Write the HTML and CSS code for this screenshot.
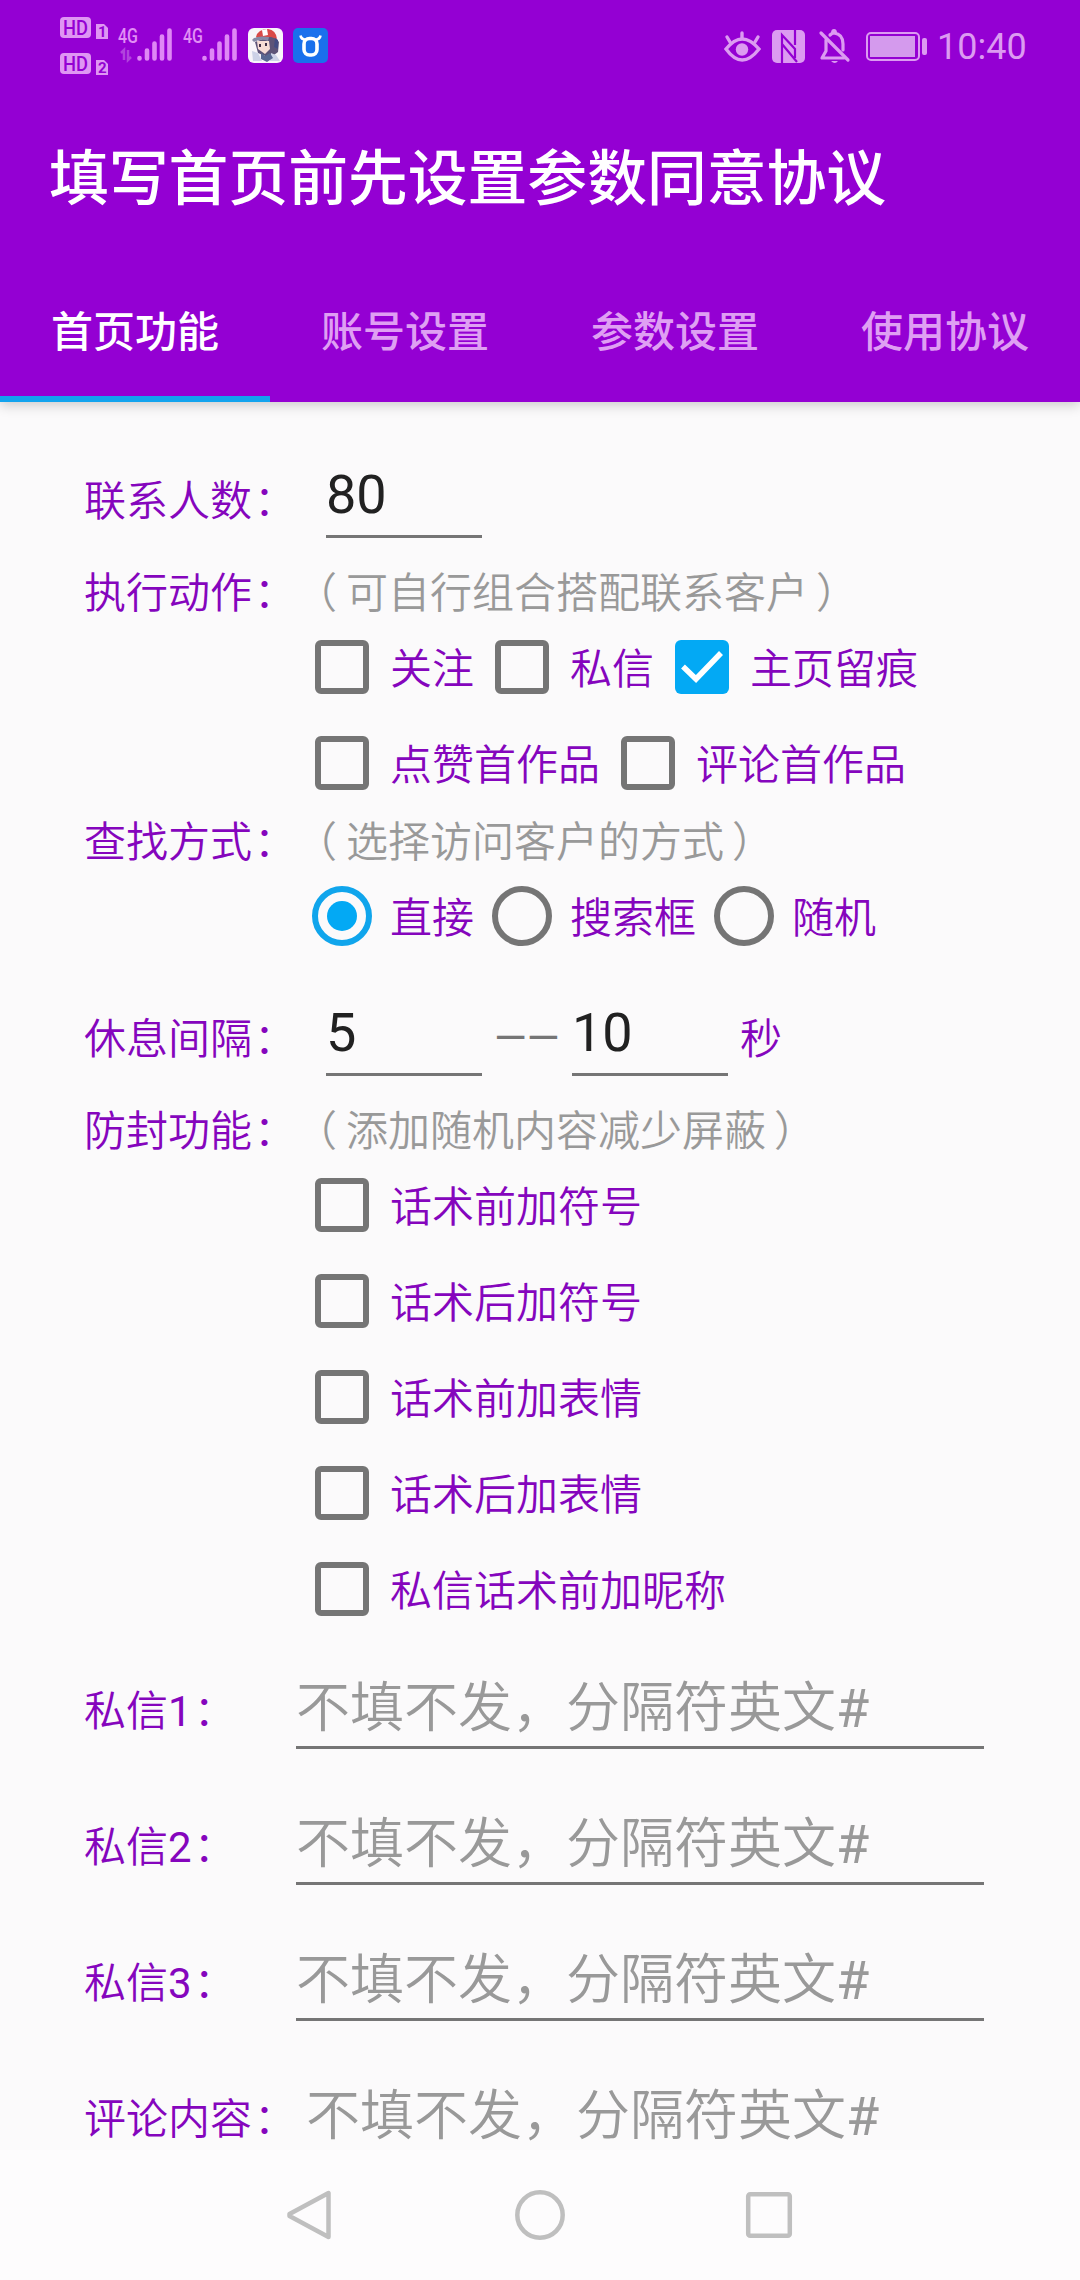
FILE: index.html
```
<!DOCTYPE html>
<html lang="zh-CN">
<head>
    <meta charset="UTF-8">
    <meta name="viewport" content="width=device-width, initial-scale=1.0">
    <title>首页功能</title>
    <link rel="stylesheet" href="styles.css">
</head>
<body>
<header class="header">
    <div class="status-bar">
        <svg class="status-left" width="290" height="90" viewBox="0 0 290 90">
            <!-- HD badges -->
            <g fill="#df96f3">
                <rect x="20" y="17" width="31" height="21" rx="4"/>
                <path d="M56 24h8l4 4v11H56z"/>
                <rect x="20" y="53" width="31" height="21" rx="4"/>
                <path d="M56 60h8l4 4v11H56z"/>
            </g>
            <g class="badge-text">
                <text x="23" y="34.500" textLength="25" lengthAdjust="spacingAndGlyphs">HD</text>
                <text x="23" y="70.500" textLength="25" lengthAdjust="spacingAndGlyphs">HD</text>
                <text class="badge-number" x="58" y="37">1</text>
                <text class="badge-number" x="58" y="73">2</text>
            </g>
            <!-- signal -->
            <g class="network-text">
                <text x="78" y="43" textLength="20" lengthAdjust="spacingAndGlyphs">4G</text>
                <text x="143" y="43" textLength="20" lengthAdjust="spacingAndGlyphs">4G</text>
            </g>
            <path d="M81 53l3-3v10M88 50v10l3-3" fill="none" stroke="#b144dd" stroke-width="2.500"/>
            <g stroke="#df88f5" stroke-width="4.600" stroke-linecap="round">
                <path d="M99.500 58v.500M107 50.500v8M114.500 43.500v15M122 36.500v22M129.500 30.500v28"/>
                <path d="M164.500 58v.500M172 50.500v8M179.500 43.500v15M187 36.500v22M194.500 30.500v28"/>
            </g>
            <!-- game icon -->
            <rect x="208" y="28" width="35" height="35" rx="6" fill="#f8f5fa"/>
            <path d="M215 42l18-7 6 7-1 10-8 6-12-5z" fill="#5d5478"/>
            <path d="M217 41h12l1 8-5 5-7-5z" fill="#f7dcd5"/>
            <path d="M216 37q2-8 12-8 8 1 9 10l-6-2-14 1z" fill="#d84a48"/>
            <path d="M212 40q4-5 17-3l-1 4q-7-3-14 1z" fill="#8689a6"/>
            <path d="M222 30l5-1 1 6-5 1z" fill="#fff"/>
            <path d="M219 44h2v3h-2zM225 43h2v3h-2z" fill="#413047"/>
            <path d="M235 38l3 2v9l-4-2z" fill="#444c83"/>
            <path d="M212 51l6 2 4 8h-9zM231 53l5 2 4 6h-10z" fill="#cdd2e7"/>
            <path d="M221 53l4 3 5-3 3 5-6 4-6-3z" fill="#596791"/>
            <!-- horned app icon -->
            <rect x="253" y="28" width="35" height="35" rx="5" fill="#1a70ec"/>
            <path d="M260.500 35.500q.5 4 6 4.500M280.500 35.500q-.5 4-6 4.500" fill="none" stroke="#fff" stroke-width="2.600"/>
            <rect x="264" y="38.500" width="13" height="16.500" rx="5.500" fill="none" stroke="#fff" stroke-width="3.600"/>
        </svg>
        <div class="status-right">
            <svg width="214" height="40" viewBox="0 0 214 40">
                <g fill="none" stroke="#dc9bf1" stroke-width="3.400" stroke-linecap="round">
                    <path d="M6 23q16-20 33 0-17 22-33 0z"/>
                    <path d="M7 11l3 5M22 7v5M38 11l-3 5"/>
                </g>
                <circle cx="22" cy="23.500" r="6.200" fill="#dc9bf1"/>
                <rect x="52" y="4" width="33" height="33" rx="5" fill="#dc9bf1"/>
                <path d="M62 37V9l13 14v9M75 4v15M62 18l15 18" fill="none" stroke="#9400d3" stroke-width="2.200"/>
                <g fill="none" stroke="#dc9bf1" stroke-width="3.200" stroke-linecap="round" stroke-linejoin="round">
                    <path d="M106 14v11l-4 7h22M110 9q2-2 4-2 9 1 9 11v6"/>
                    <path d="M101 7l27 27"/>
                </g>
                <path d="M111 7q0-4 3-4t3 4zM111 35h7q-3 4-7 0z" fill="#dc9bf1"/>
                <rect x="147" y="7" width="52" height="27" rx="4" fill="none" stroke="#dc9bf1" stroke-width="2"/>
                <rect x="150" y="10" width="45" height="21" fill="#d49aed"/>
                <rect x="202" y="12" width="5" height="17" rx="2" fill="#dc9bf1"/>
            </svg>
            <span class="clock">10:40</span>
        </div>
    </div>
    <h1>填写首页前先设置参数同意协议</h1>
    <nav class="tabs">
        <span class="tab active">首页功能</span>
        <span class="tab">账号设置</span>
        <span class="tab">参数设置</span>
        <span class="tab">使用协议</span>
    </nav>
</header>

<main>
    <div class="row number-row">
        <span class="label">联系人数<span class="colon">：</span></span>
        <span class="number-field">80</span>
    </div>

    <div class="row hint-row">
        <span class="label">执行动作<span class="colon">：</span></span>
        <span class="hint"><span class="open">（</span>可自行组合搭配联系客户<span class="close">）</span></span>
    </div>
    <div class="choices action-choices">
        <div class="choice-line">
            <label class="choice"><i class="box"></i>关注</label>
            <label class="choice"><i class="box"></i>私信</label>
            <label class="choice"><i class="box checked"><svg width="54" height="54" viewBox="0 0 54 54"><path d="M8 26.500l13 12.500L46 13" fill="none" stroke="#fff" stroke-width="5.500"/></svg></i>主页留痕</label>
        </div>
        <div class="choice-line">
            <label class="choice"><i class="box"></i>点赞首作品</label>
            <label class="choice"><i class="box"></i>评论首作品</label>
        </div>
    </div>

    <div class="row hint-row">
        <span class="label">查找方式<span class="colon">：</span></span>
        <span class="hint"><span class="open">（</span>选择访问客户的方式<span class="close">）</span></span>
    </div>
    <div class="choices search-choices">
        <div class="choice-line">
            <label class="choice"><i class="radio selected"></i>直接</label>
            <label class="choice"><i class="radio"></i>搜索框</label>
            <label class="choice"><i class="radio"></i>随机</label>
        </div>
    </div>

    <div class="row number-row">
        <span class="label">休息间隔<span class="colon">：</span></span>
        <span class="number-field">5</span>
        <span class="dash">——</span>
        <span class="number-field">10</span>
        <span class="unit">秒</span>
    </div>

    <div class="row hint-row">
        <span class="label">防封功能<span class="colon">：</span></span>
        <span class="hint"><span class="open">（</span>添加随机内容减少屏蔽<span class="close">）</span></span>
    </div>
    <div class="choices guard-choices">
        <label class="choice"><i class="box"></i>话术前加符号</label>
        <label class="choice"><i class="box"></i>话术后加符号</label>
        <label class="choice"><i class="box"></i>话术前加表情</label>
        <label class="choice"><i class="box"></i>话术后加表情</label>
        <label class="choice"><i class="box"></i>私信话术前加昵称</label>
    </div>

    <div class="row message-row">
        <span class="label">私信<span class="digit">1</span><span class="colon">：</span></span>
        <span class="text-field">不填不发，分隔符英文<span class="digit">#</span></span>
    </div>
    <div class="row message-row">
        <span class="label">私信<span class="digit">2</span><span class="colon">：</span></span>
        <span class="text-field">不填不发，分隔符英文<span class="digit">#</span></span>
    </div>
    <div class="row message-row">
        <span class="label">私信<span class="digit">3</span><span class="colon">：</span></span>
        <span class="text-field">不填不发，分隔符英文<span class="digit">#</span></span>
    </div>
    <div class="row message-row comment-row">
        <span class="label">评论内容<span class="colon">：</span></span>
        <span class="text-field">不填不发，分隔符英文<span class="digit">#</span></span>
    </div>
</main>

<footer class="nav-bar">
    <svg width="60" height="60" viewBox="0 0 60 60"><path d="M47.500 8v44L8.500 31v-2z"/></svg>
    <svg width="60" height="60" viewBox="0 0 60 60"><circle cx="30" cy="30" r="22.700"/></svg>
    <svg width="60" height="60" viewBox="0 0 60 60"><rect x="9.200" y="9.200" width="41.600" height="41.600" rx="2"/></svg>
</footer>
</body>
</html>
```
FILE: styles.css
```
* {
    box-sizing: border-box;
}

body {
    margin: 0;
    width: 1080px;
    height: 2280px;
    overflow: hidden;
    background-color: #fbfafb;
    font-family: Roboto, "Noto Sans CJK SC", sans-serif;
    font-size: 42px;
    font-weight: 350;
    line-height: 54px;
    color: #8505bd;
}

.header {
    height: 402px;
    background-color: #9400d3;
    box-shadow: 0 3px 12px rgba(0, 0, 0, 0.2);
}

.status-bar {
    display: flex;
    justify-content: space-between;
    height: 93px;
    padding: 0 54px 0 40px;
}

.badge-text {
    fill: #9400d3;
    font-size: 20px;
    font-weight: 500;
}

.badge-number {
    font-size: 15px;
    font-weight: 700;
}

.network-text {
    fill: #e18ff5;
    font-size: 20px;
    font-weight: 500;
}

.status-right {
    display: flex;
    align-items: center;
    width: 306px;
    height: 90px;
    padding-top: 2px;
    color: #dc9bf1;
}

.status-right svg {
    flex: none;
}

.clock {
    margin-left: 3px;
    padding-top: 2px;
    font-size: 36px;
    font-weight: 400;
    white-space: nowrap;
}

h1 {
    margin: 0;
    padding: 3px 0 0 49px;
    height: 168px;
    line-height: 168px;
    font-size: 59.800px;
    font-weight: 500;
    color: #fff;
}

.tabs {
    display: flex;
    height: 141px;
}

.tab {
    flex: 1;
    padding-top: 8px;
    line-height: 127px;
    text-align: center;
    font-weight: 500;
    color: #df9ff3;
    border-bottom: 6px solid transparent;
}

.tab.active {
    color: #fff;
    border-bottom-color: #12a3ee;
}

main {
    height: 1748px;
    padding: 48px 0 0 84px;
}

.row {
    display: flex;
    align-items: center;
    white-space: nowrap;
}

.label {
    width: 210px;
    padding-top: 4px;
}

.colon {
    margin-left: 2px;
}

.digit {
    font-weight: 400;
}

.number-row {
    height: 100px;
    margin-bottom: 15px;
}

.number-field {
    align-self: flex-start;
    width: 156px;
    height: 88px;
    margin-left: 32px;
    line-height: 90px;
    font-size: 54px;
    font-weight: 400;
    color: #212121;
    border-bottom: 3px solid #757575;
}

.dash {
    width: 73px;
    padding-left: 12px;
    padding-top: 2px;
    font-weight: 400;
    color: #757575;
}

.dash + .number-field {
    margin-left: 17px;
}

.unit {
    margin-left: 12px;
    padding-top: 4px;
}

.hint-row {
    height: 54px;
}

.hint {
    margin-left: 10px;
    padding-top: 4px;
    color: #999;
}

/* brackets sit in the middle of their cell */
.open {
    margin-left: -9px;
    margin-right: 9px;
}

.close {
    margin-left: 8px;
}

.choices {
    margin-left: 210px;
}

.action-choices {
    margin-bottom: 3px;
}

.search-choices {
    margin-bottom: 24px;
}

.guard-choices {
    margin-bottom: 5px;
}

.choice-line {
    display: flex;
}

.choice {
    display: flex;
    align-items: center;
    height: 96px;
    line-height: 90px;
    padding-top: 6px;
    white-space: nowrap;
}

.box {
    width: 54px;
    height: 54px;
    margin: -6px 21px 0;
    border: 6px solid #757575;
    border-radius: 6px;
}

.box.checked {
    border: none;
    background-color: #03a9f4;
}

.box svg {
    display: block;
}

.radio {
    width: 60px;
    height: 60px;
    margin: -6px 18px 0;
    border: 6px solid #757575;
    border-radius: 50%;
}

.radio.selected {
    padding: 9px;
    border-color: #10a5ec;
    background: #03a9f4 content-box;
}

.message-row {
    height: 136px;
}

.text-field {
    align-self: flex-start;
    width: 688px;
    height: 107px;
    margin-left: 2px;
    padding-top: 24px;
    line-height: 86px;
    font-size: 54px;
    color: #999;
    border-bottom: 3px solid #757575;
}

.comment-row {
    height: 100px;
}

.comment-row .label {
    padding-top: 40px;
}

.comment-row .text-field {
    height: 100px;
    margin-left: 12px;
    border: none;
}

.nav-bar {
    display: flex;
    justify-content: center;
    align-items: center;
    gap: 169px;
    height: 130px;
    background-color: #fdfcfd;
}

.nav-bar svg {
    fill: none;
    stroke: #bfbfbf;
    stroke-width: 4.500;
    stroke-linejoin: round;
}
```
